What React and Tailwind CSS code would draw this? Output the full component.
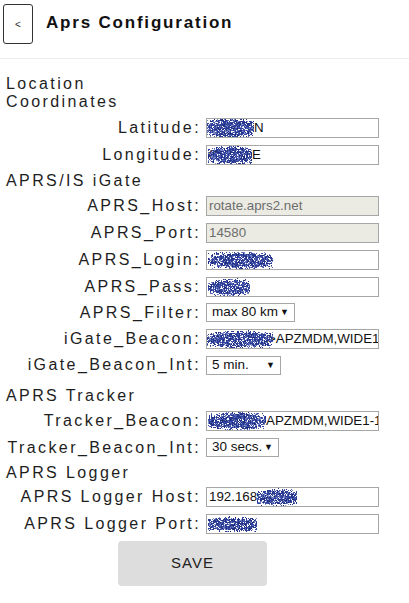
import React from "react";

function rng(seed) {
  let s = seed;
  return () => {
    s = (s * 1103515245 + 12345) & 0x7fffffff;
    return s / 0x7fffffff;
  };
}

const COLORS = ["#24358a", "#2f419a", "#3a4ca6", "#5566b5", "#1c2b7a", "#7f8cc8", "#2a3c93"];

function Noise({ w, h = 22, seed = 1 }) {
  const r = rng(seed);
  const rects = [];
  for (let y = 0; y < h; y++) {
    for (let x = 0; x < w; x++) {
      const dx = (x - w / 2) / (w / 2);
      const dy = (y - h / 2) / (h / 2);
      const d = dx * dx * 0.5 + dy * dy;
      const p = d < 0.55 ? 0.85 : d < 0.9 ? 0.45 : d < 1.2 ? 0.08 : 0;
      if (r() < p) {
        const c = COLORS[Math.floor(r() * COLORS.length)];
        rects.push(<rect key={x + "-" + y} x={x} y={y} width="1" height="1" fill={c} />);
      }
    }
  }
  return (
    <svg width={w} height={h} viewBox={`0 0 ${w} ${h}`} shapeRendering="crispEdges" className="shrink-0 block">
      {rects}
    </svg>
  );
}

function Label({ children }) {
  return (
    <div className="w-[195px] shrink-0 text-right text-[16px] tracking-[2.4px] text-[#1e1e1e] whitespace-nowrap leading-[18px]">
      {children}
    </div>
  );
}

function Row({ label, h = "h-[27px]", children }) {
  return (
    <div className={`flex items-center ${h}`}>
      <Label>{label}</Label>
      <div className="ml-[5px] flex items-center">{children}</div>
    </div>
  );
}

function Field({ children, disabled }) {
  return (
    <div
      className={`relative w-[173px] h-[20px] border border-[#a6a6a6] flex items-center pl-[1px] overflow-hidden whitespace-nowrap text-[13.33px] ${
        disabled ? "bg-[#ebebe4] text-[#6d6d6d]" : "bg-white text-[#111]"
      }`}
    >
      {children}
    </div>
  );
}

function Select({ w, value }) {
  return (
    <div className={`${w} h-[19px] border border-[#a6a6a6] bg-white flex items-center justify-between pl-[5px] pr-[5px] text-[13.5px] text-[#111] whitespace-nowrap overflow-hidden`}>
      <span className="whitespace-nowrap">{value}</span>
      <span className="text-[9px] leading-none shrink-0">▼</span>
    </div>
  );
}

function Heading({ children, className = "" }) {
  return (
    <div className={`text-[16px] tracking-[2.4px] leading-[18px] text-[#1e1e1e] ${className}`}>{children}</div>
  );
}

export default function App() {
  return (
    <div className="w-[409px] h-[603px] bg-white font-['Liberation_Sans',Arial,sans-serif] overflow-hidden">
      <div className="flex items-center pt-[4px] pb-[14px] border-b border-[#ececec]">
        <div className="ml-[3px] w-[30px] h-[40px] border border-[#333] rounded-[3px] flex items-center justify-center text-[10px] text-[#333]">
          &lt;
        </div>
        <div className="ml-[13px] text-[17px] font-bold tracking-[1.8px] text-[#111] -mt-[2px]">Aprs Configuration</div>
      </div>

      <div className="pl-[6px]">
        <Heading className="mt-[16px] mb-[3px] w-[130px]">Location Coordinates</Heading>
        <Row label="Latitude:">
          <Field>
            <div className="-ml-[3px]">
              <Noise w={49} h={22} seed={7} />
            </div>
            <span>N</span>
          </Field>
        </Row>
        <Row label="Longitude:">
          <Field>
            <span className="absolute left-[2px]">0</span>
            <div className="relative">
              <Noise w={44} h={20} seed={13} />
            </div>
            <span>E</span>
          </Field>
        </Row>

        <Heading className="mt-[4px] mb-[2px]">APRS/IS iGate</Heading>
        <Row label="APRS_Host:">
          <Field disabled>
            <span className="pl-[1px]">rotate.aprs2.net</span>
          </Field>
        </Row>
        <Row label="APRS_Port:">
          <Field disabled>
            <span className="pl-[1px]">14580</span>
          </Field>
        </Row>
        <Row label="APRS_Login:">
          <Field>
            <Noise w={65} h={18} seed={21} />
          </Field>
        </Row>
        <Row label="APRS_Pass:">
          <Field>
            <Noise w={42} h={18} seed={33} />
          </Field>
        </Row>
        <Row label="APRS_Filter:" h="h-[25px]">
          <Select w="w-[89px]" value="max 80 km" />
        </Row>
        <Row label="iGate_Beacon:">
          <Field>
            <span className="pl-[60px]">&gt;APZMDM,WIDE1-1</span>
            <div className="absolute left-0 top-0">
              <Noise w={66} h={18} seed={45} />
            </div>
          </Field>
        </Row>
        <Row label="iGate_Beacon_Int:" h="h-[26px]">
          <Select w="w-[75px]" value="5 min." />
        </Row>

        <Heading className="mt-[9px] mb-[2px]">APRS Tracker</Heading>
        <Row label="Tracker_Beacon:">
          <Field>
            <Noise w={58} h={19} seed={57} />
            <span>APZMDM,WIDE1-1</span>
          </Field>
        </Row>
        <Row label="Tracker_Beacon_Int:">
          <Select w="w-[73px]" value="30 secs." />
        </Row>

        <Heading className="mt-[3px] mb-[1px]">APRS Logger</Heading>
        <Row label="APRS Logger Host:">
          <Field>
            <span className="pl-[1px]">192.168</span>
            <Noise w={40} h={18} seed={69} />
          </Field>
        </Row>
        <Row label="APRS Logger Port:">
          <Field>
            <Noise w={49} h={16} seed={81} />
          </Field>
        </Row>

        <div className="w-[373px] flex justify-center mt-[4px]">
          <div className="w-[149px] h-[45px] bg-[#dddddd] rounded-[4px] flex items-center justify-center text-[15px] tracking-[1px] text-[#222]">
            SAVE
          </div>
        </div>
      </div>
    </div>
  );
}
